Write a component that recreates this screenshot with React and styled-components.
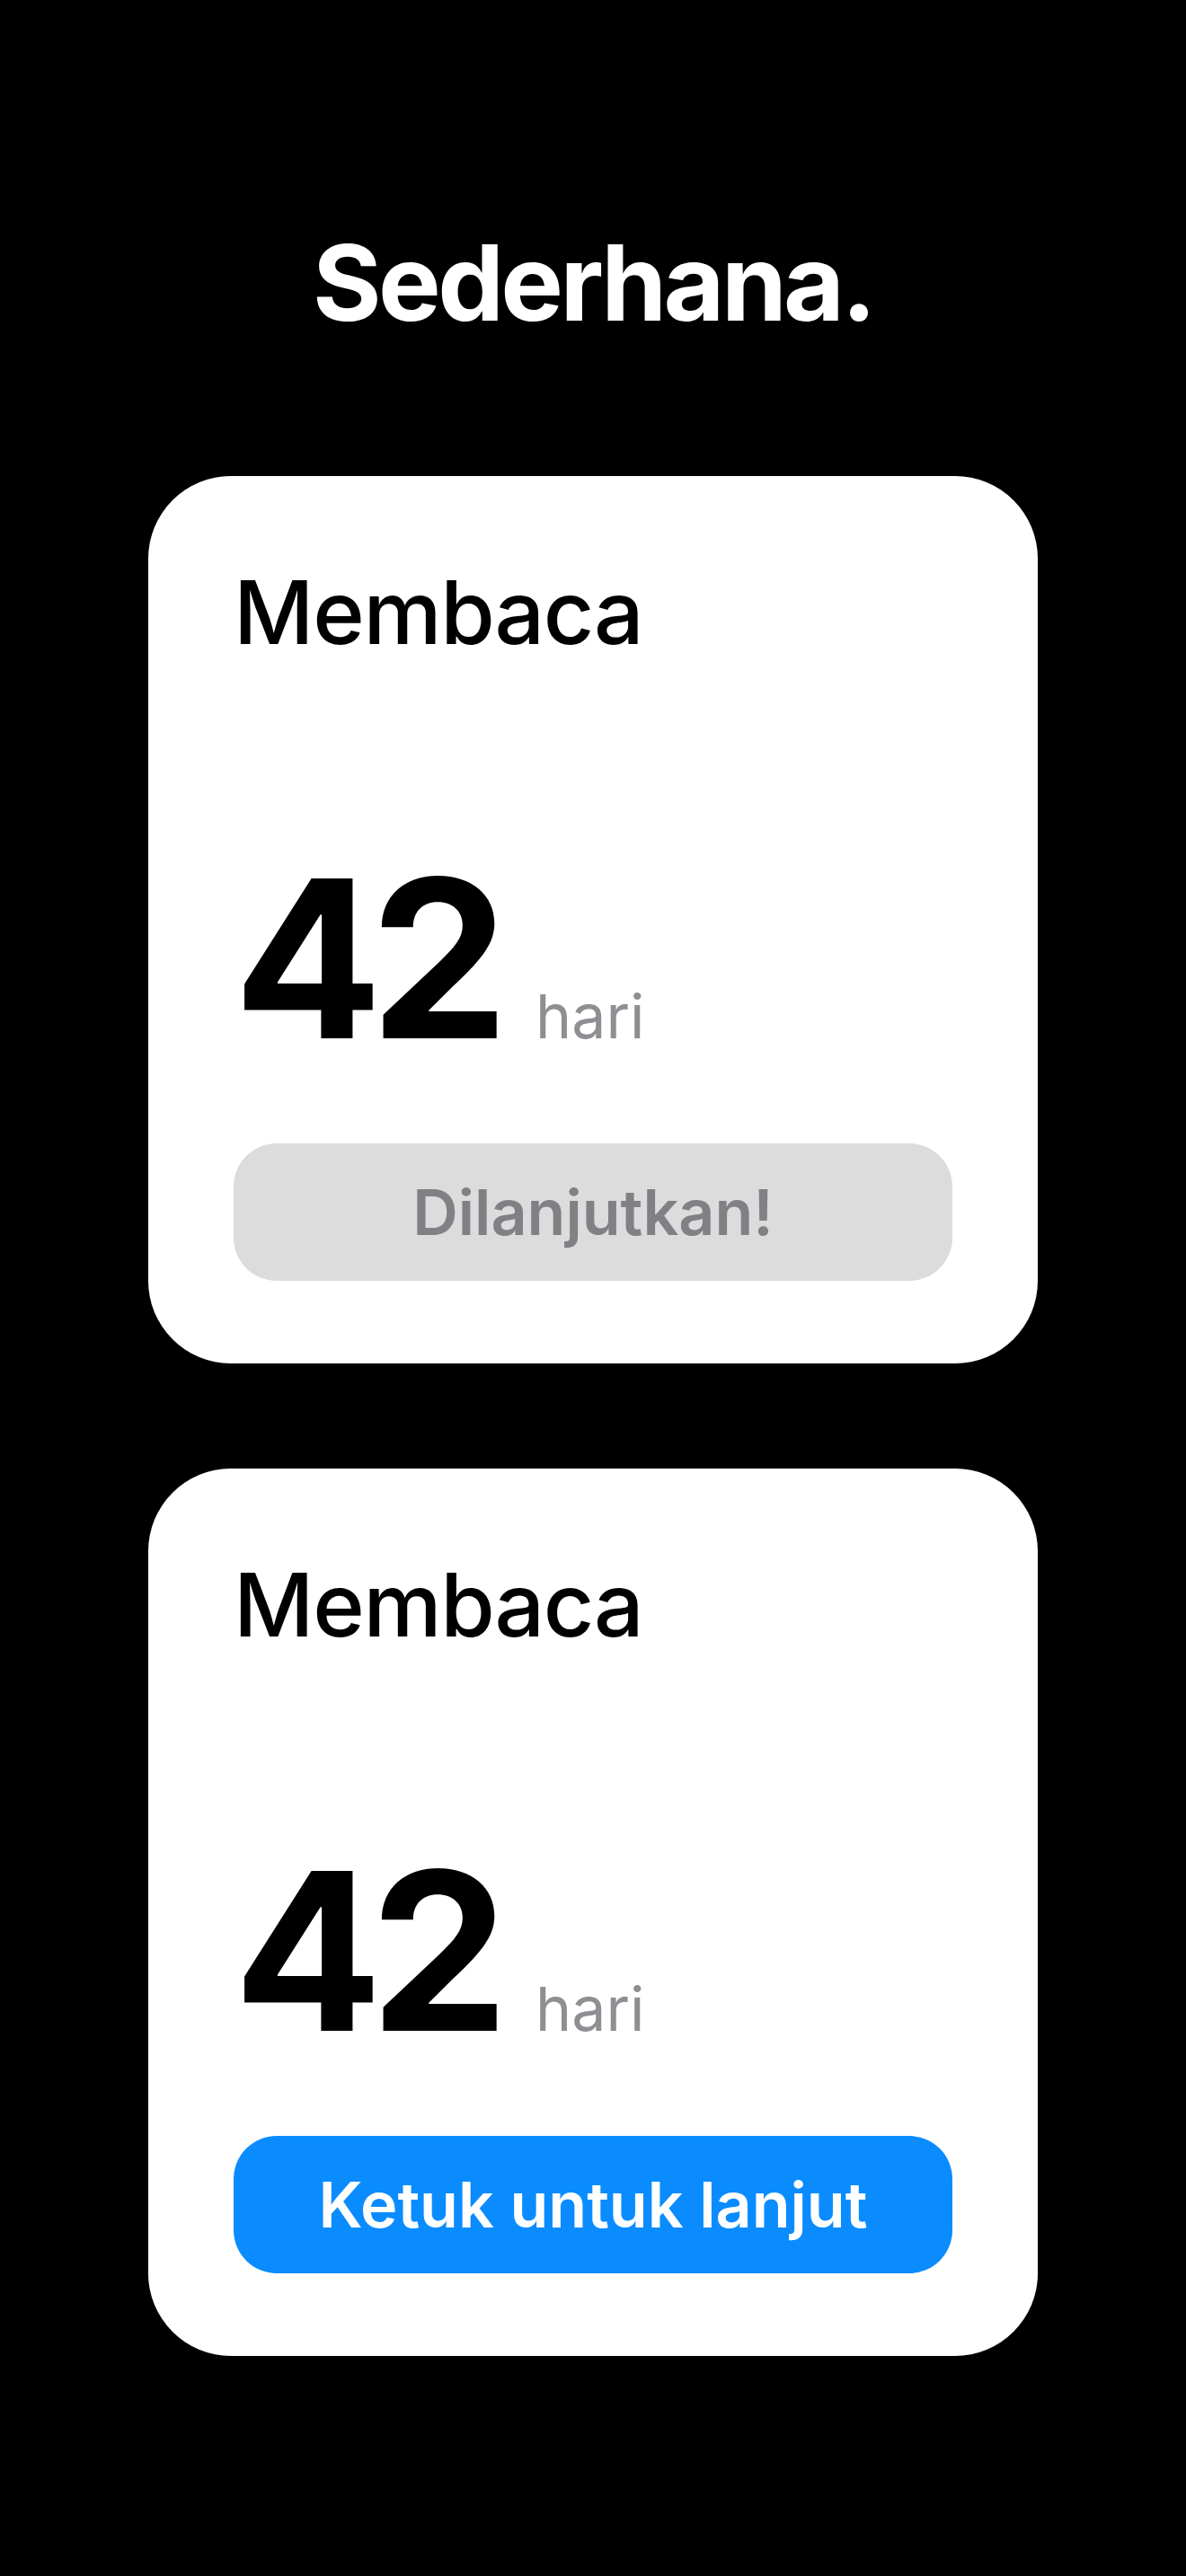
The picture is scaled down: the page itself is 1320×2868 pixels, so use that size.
import React from 'react';
import styled, { createGlobalStyle } from 'styled-components';

const GlobalStyle = createGlobalStyle`
  html, body {
    margin: 0;
    padding: 0;
    background: #000;
  }
  body {
    font-family: Inter, "Noto Sans", "Liberation Sans", sans-serif;
    -webkit-font-smoothing: antialiased;
  }
`;

const Page = styled.div`
  min-height: 2868px;
  background: #000;
  display: flex;
  flex-direction: column;
  align-items: center;
  padding-top: 256px;
  box-sizing: border-box;
`;

const Heading = styled.h1`
  margin: 0 0 157px;
  font-size: 117px;
  line-height: 1;
  font-weight: 700;
  color: #fff;
  letter-spacing: -3.6px;
`;

const CardList = styled.div`
  display: flex;
  flex-direction: column;
  gap: 117px;
`;

const Card = styled.div`
  width: 990px;
  height: 988px;
  box-sizing: border-box;
  padding: 103px 95px 92px;
  background: #fff;
  border-radius: 92px;
  display: flex;
  flex-direction: column;
`;

const Label = styled.div`
  font-size: 98px;
  line-height: 1;
  font-weight: 500;
  color: #000;
  letter-spacing: -1.3px;
`;

const CountRow = styled.div`
  margin-top: 214px;
  display: flex;
  align-items: baseline;
`;

const Count = styled.span`
  font-size: 245px;
  line-height: 1;
  font-weight: 700;
  color: #000;
  letter-spacing: -14px;
`;

const Unit = styled.span`
  margin-left: 44px;
  font-size: 68px;
  line-height: 1;
  font-weight: 400;
  color: #8e8e93;
`;

const ActionButton = styled.button`
  margin-top: 83px;
  height: 153px;
  width: 100%;
  border: none;
  border-radius: 48px;
  display: flex;
  align-items: center;
  justify-content: center;
  font-family: inherit;
  font-size: 70px;
  line-height: 1;
  font-weight: 600;
  background: ${(p) => (p.done ? '#dcdcdc' : '#0a8cff')};
  color: ${(p) => (p.done ? '#808085' : '#fff')};
  cursor: pointer;
`;

const HabitCard = ({ title, days, done }) => (
  <Card>
    <Label>{title}</Label>
    <CountRow>
      <Count>{days}</Count>
      <Unit>hari</Unit>
    </CountRow>
    <ActionButton done={done}>
      {done ? 'Dilanjutkan!' : 'Ketuk untuk lanjut'}
    </ActionButton>
  </Card>
);

const App = () => (
  <>
    <GlobalStyle />
    <Page>
      <Heading>Sederhana.</Heading>
      <CardList>
        <HabitCard title="Membaca" days={42} done />
        <HabitCard title="Membaca" days={42} />
      </CardList>
    </Page>
  </>
);

export default App;
